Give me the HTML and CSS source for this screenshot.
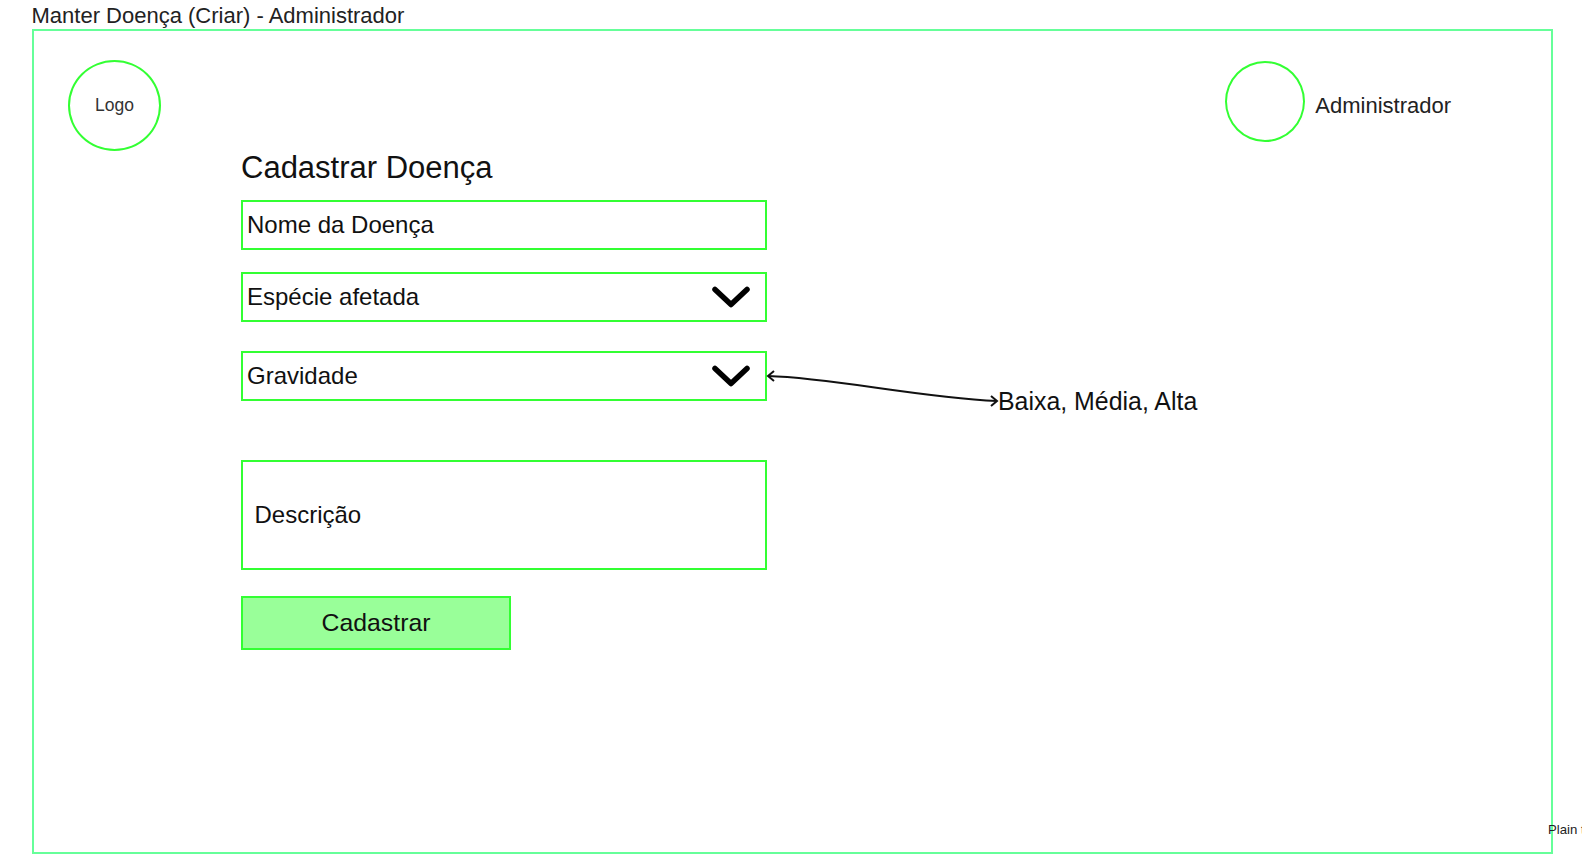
FILE: index.html
```html
<!DOCTYPE html>
<html lang="pt-BR">
<head>
    <meta charset="UTF-8">
    <title>Manter Doença (Criar) - Administrador</title>
    <link rel="stylesheet" href="styles.css">
</head>
<body>
    <h2 class="page-title">Manter Doença (Criar) - Administrador</h2>

    <div class="frame">
        <div class="top-bar">
            <div class="logo">Logo</div>
            <div class="user">
                <div class="avatar"></div>
                <span class="user-name">Administrador</span>
            </div>
        </div>

        <div class="content">
            <form class="form">
                <h1 class="form-title">Cadastrar Doença</h1>
                <div class="field field-name">Nome da Doença</div>
                <div class="field field-species">
                    Espécie afetada
                    <svg class="chevron" viewBox="0 0 38 24"><path d="M3 3.5 L19 18.5 L35 3.5"/></svg>
                </div>
                <div class="field field-severity">
                    Gravidade
                    <svg class="chevron" viewBox="0 0 38 24"><path d="M3 3.5 L19 18.5 L35 3.5"/></svg>
                </div>
                <div class="field field-description">Descrição</div>
                <button type="button" class="submit">Cadastrar</button>
            </form>
            <div class="note">Baixa, Média, Alta</div>
        </div>

        <svg class="connector" viewBox="0 0 240 36">
            <path d="M3 6 C 70 8, 150 27, 232 31"/>
            <path d="M9 1 L3 6 L9 11"/>
            <path d="M226 26 L232 31 L226 36"/>
        </svg>
        <span class="plain-text">Plain text</span>
    </div>
</body>
</html>
```

FILE: styles.css
```css
html, body {
    margin: 0;
    height: 100%;
    overflow: hidden;
}
body {
    font-family: "Liberation Sans", Arial, sans-serif;
    background-color: white;
    color: #111;
}
.page-title {
    margin: 0 0 0 31.5px;
    height: 29px;
    font-size: 22px;
    font-weight: normal;
    line-height: 31px;
    color: #222;
}
.frame {
    position: relative;
    box-sizing: border-box;
    width: 1521px;
    height: 825px;
    margin-left: 32px;
    border: 2px solid #66ff99;
}
.top-bar {
    display: flex;
    justify-content: space-between;
    align-items: center;
    height: 91px;
    margin-top: 29px;
    padding-left: 34px;
    padding-right: 100px;
}
.logo {
    display: flex;
    justify-content: center;
    align-items: center;
    box-sizing: border-box;
    width: 93px;
    height: 91px;
    border: 2px solid #33ff33;
    border-radius: 50%;
    font-size: 17.5px;
    color: #333;
}
.user {
    display: flex;
    align-items: center;
    gap: 10px;
}
.avatar {
    box-sizing: border-box;
    width: 80px;
    height: 81px;
    margin-top: -8px;
    border: 2px solid #33ff33;
    border-radius: 50%;
}
.user-name {
    font-size: 22px;
    color: #222;
}
.content {
    display: flex;
    align-items: flex-start;
    padding-left: 207px;
}
.form {
    display: flex;
    flex-direction: column;
    width: 526px;
}
.form-title {
    margin: 0;
    height: 49px;
    font-size: 31px;
    font-weight: normal;
    line-height: 34px;
}
.field {
    display: flex;
    justify-content: space-between;
    align-items: center;
    box-sizing: border-box;
    height: 50px;
    padding-left: 4px;
    padding-right: 15px;
    border: 2px solid #33ff33;
    font-size: 24px;
}
.field-species {
    margin-top: 22px;
}
.field-severity {
    margin-top: 29px;
}
.field-description {
    height: 110px;
    margin-top: 59px;
    padding-left: 11.5px;
}
.chevron {
    width: 38px;
    height: 24px;
    margin-top: 2px;
    fill: none;
    stroke: #000;
    stroke-width: 5.5;
    stroke-linecap: round;
    stroke-linejoin: round;
}
.submit {
    box-sizing: border-box;
    width: 270px;
    height: 54px;
    margin-top: 26px;
    background-color: #99ff99;
    border: 2px solid #33ff33;
    font-family: inherit;
    font-size: 24.8px;
    color: #111;
}
.note {
    margin-top: 236px;
    margin-left: 231px;
    font-size: 24.9px;
    line-height: 28px;
}
.connector {
    position: absolute;
    left: 730.5px;
    top: 339px;
    width: 240px;
    height: 36px;
    overflow: visible;
    fill: none;
    stroke: #111;
    stroke-width: 2;
}
.plain-text {
    position: absolute;
    left: 1514px;
    top: 791px;
    font-size: 13.2px;
    color: #222;
    white-space: nowrap;
}
```
